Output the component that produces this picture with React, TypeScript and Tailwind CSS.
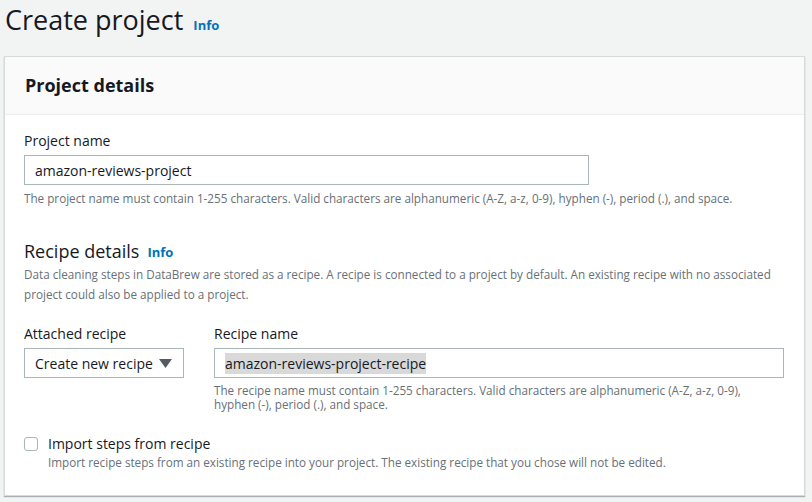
export default function App() {
  return (
    <div className="h-[502px] w-[812px] overflow-hidden bg-[#f2f3f3] text-[#16191f]" style={{ fontFamily: '"Open Sans", "Noto Sans", sans-serif' }}>
      <div className="flex h-[56px] items-baseline gap-[10px] pt-[3px] pl-[5px]">
        <h1 className="text-[27px] leading-[34px] font-normal">Create project</h1>
        <a className="text-[13px] font-bold text-[#0073bb]">Info</a>
      </div>
      <div className="ml-[4px] w-[801px] border border-[#d5dbdb] bg-white shadow-[0_1px_1px_rgba(0,28,36,0.3)]">
        <div className="flex h-[58px] items-center border-b border-[#eaeded] bg-[#fafafa] px-[20px]">
          <h2 className="text-[18px] font-bold">Project details</h2>
        </div>
        <div className="px-[19px] pt-[16px]">
          <label className="block text-[14px] leading-[20px]">Project name</label>
          <div className="mt-[4px] flex h-[30px] w-[565px] items-center border border-[#aab7b8] px-[10px] text-[14px]">
            amazon-reviews-project
          </div>
          <p className="mt-[5px] text-[11.7px] leading-[16px] text-[#687078]">
            The project name must contain 1-255 characters. Valid characters are alphanumeric (A-Z, a-z, 0-9), hyphen (-), period (.), and space.
          </p>

          <div className="mt-[33px] flex items-center gap-[8px]">
            <h3 className="text-[18px] leading-[24px] font-normal">Recipe details</h3>
            <a className="mt-[3px] text-[13px] font-bold text-[#0073bb]">Info</a>
          </div>
          <p className="mt-[1px] text-[11.7px] leading-[20px] text-[#687078]">
            Data cleaning steps in DataBrew are stored as a recipe. A recipe is connected to a project by default. An existing recipe with no associated project could also be applied to a project.
          </p>

          <div className="mt-[20px] flex gap-[30px]">
            <div className="w-[160px]">
              <label className="block text-[14px] leading-[20px]">Attached recipe</label>
              <div className="mt-[4px] flex h-[30px] items-center justify-between border border-[#aab7b8] pr-[11px] pl-[10px] text-[14px]">
                <span>Create new recipe</span>
                <svg width="13" height="9" viewBox="0 0 13 9">
                  <path d="M0 0h13L6.5 9z" fill="#545b64" />
                </svg>
              </div>
            </div>
            <div className="w-[570px]">
              <label className="block text-[14px] leading-[20px]">Recipe name</label>
              <div className="mt-[4px] flex h-[30px] items-center border border-[#aab7b8] px-[10px] text-[14px]">
                <span className="bg-[#d9d9d9]">amazon-reviews-project-recipe</span>
              </div>
              <p className="mt-[5px] text-[11.7px] leading-[14px] text-[#687078]">
                The recipe name must contain 1-255 characters. Valid characters are alphanumeric (A-Z, a-z, 0-9), hyphen (-), period (.), and space.
              </p>
            </div>
          </div>

          <div className="mt-[23px] flex gap-[10px] pb-[25px]">
            <div className="mt-[3px] h-[14px] w-[14px] rounded-[3px] border border-[#aab7b8] bg-white" />
            <div>
              <div className="text-[14px] leading-[20px]">Import steps from recipe</div>
              <div className="text-[11.7px] leading-[16px] text-[#687078]">
                Import recipe steps from an existing recipe into your project. The existing recipe that you chose will not be edited.
              </div>
            </div>
          </div>
        </div>
      </div>
    </div>
  );
}
